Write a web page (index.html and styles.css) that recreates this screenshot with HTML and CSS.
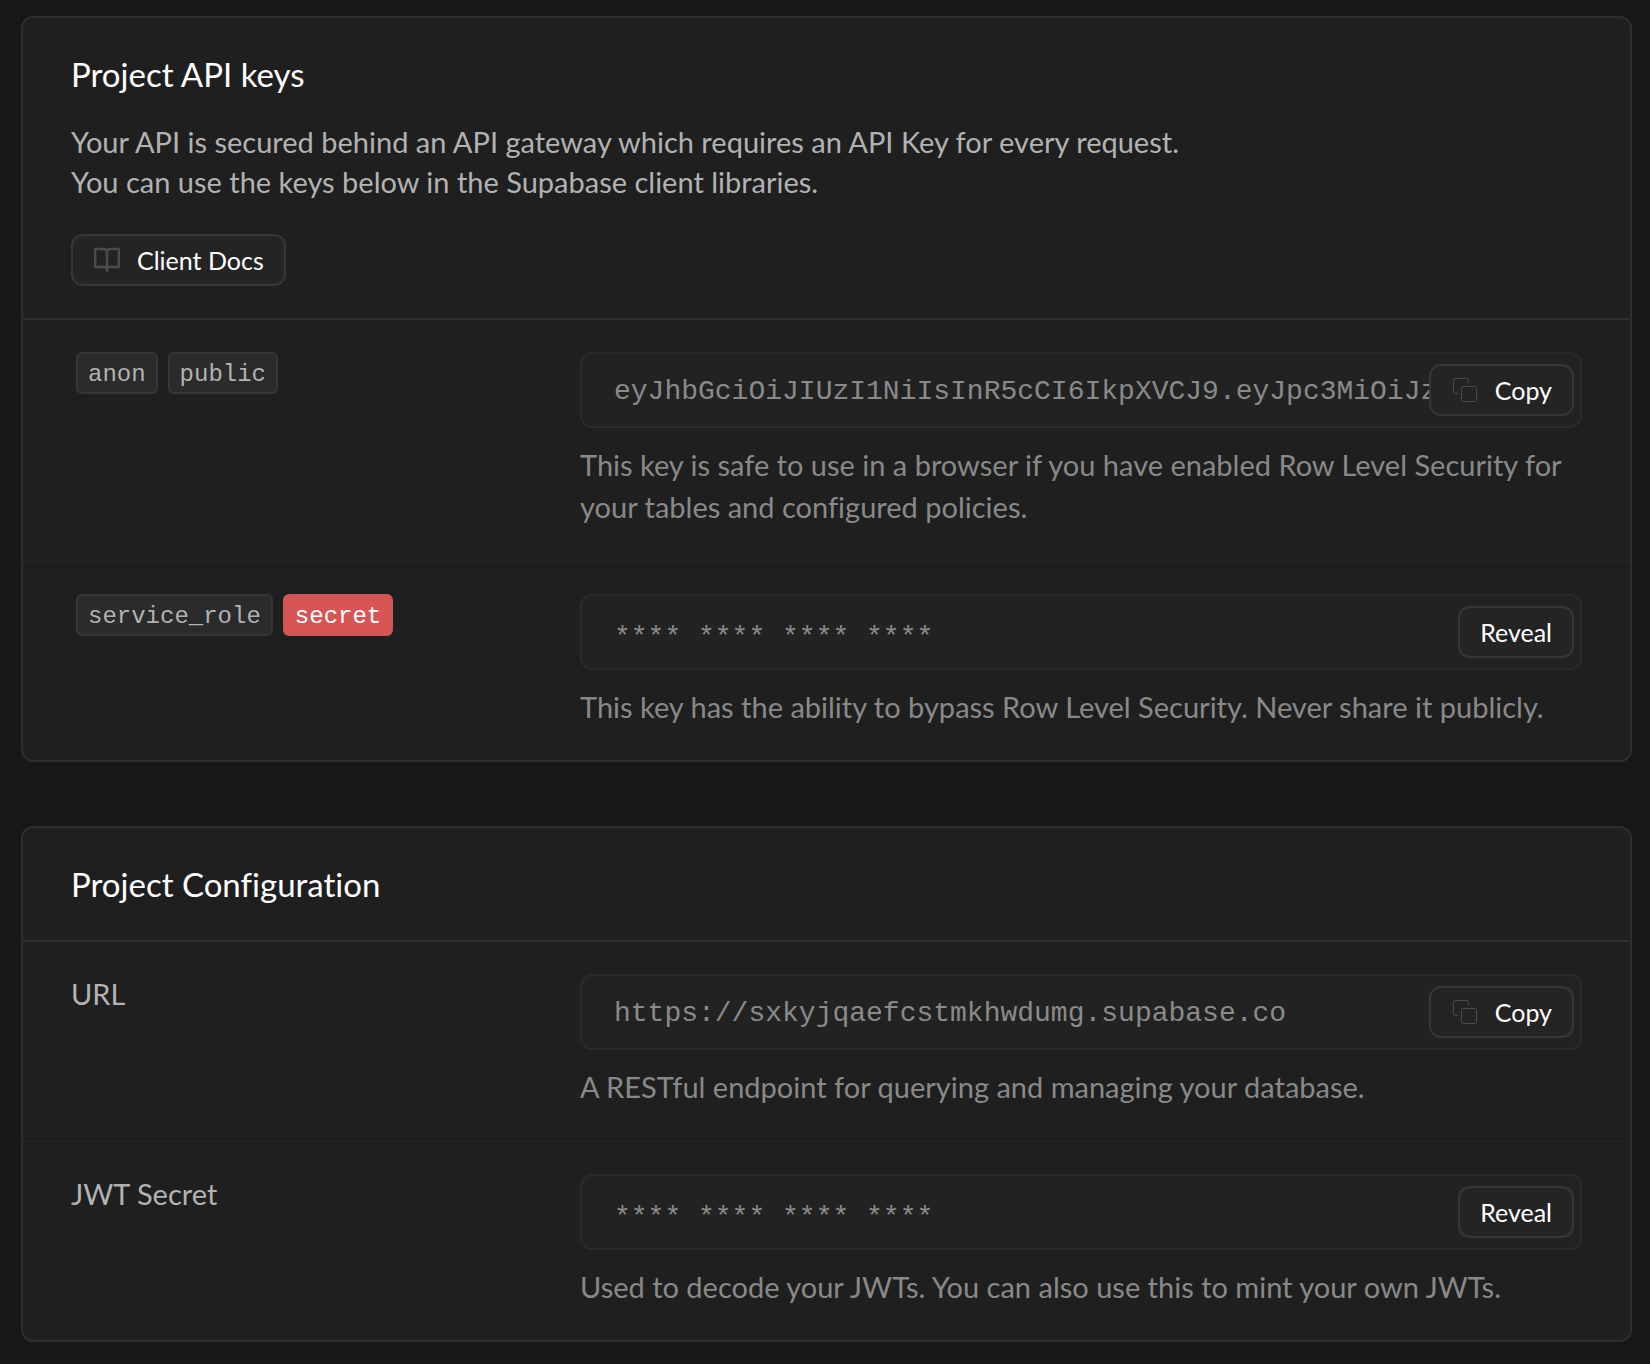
FILE: index.html
```html
<!DOCTYPE html>
<html lang="en">
<head>
<meta charset="utf-8">
<meta name="viewport" content="width=device-width, initial-scale=1">
<title>API Settings</title>
<link rel="stylesheet" href="styles.css">
</head>
<body>
<main class="page">
  <section class="card">
    <header class="card-header">
      <h2 class="card-title">Project API keys</h2>
      <p class="card-text">Your API is secured behind an API gateway which requires an API Key for every request.<br>You can use the keys below in the Supabase client libraries.</p>
      <button class="btn" type="button">
        <svg class="icon" viewBox="0 0 28 28" fill="none" stroke="currentColor" stroke-width="2.4" stroke-linejoin="round" stroke-linecap="round" aria-hidden="true"><path d="M14 6.500c0-2-1.500-3.500-3.500-3.500H2.200v18h9.300c1.500 0 2.500 1.200 2.500 3.800V6.500c0-2 1.500-3.500 3.500-3.500h8.300v18h-9.300c-1.500 0-2.500 1.200-2.500 3.800"/></svg>
        Client Docs
      </button>
    </header>
    <div class="row">
      <label class="row-label chips" for="anon-key"><code class="chip">anon</code><code class="chip">public</code></label>
      <div class="row-body">
        <div class="field">
          <input class="input" id="anon-key" type="text" readonly value="eyJhbGciOiJIUzI1NiIsInR5cCI6IkpXVCJ9.eyJpc3MiOiJz" aria-describedby="anon-help">
          <button class="btn field-btn" type="button">
            <svg class="icon" viewBox="0 0 28 28" fill="none" stroke="currentColor" stroke-linecap="round" aria-hidden="true"><rect x="10.500" y="10.500" width="15" height="15" rx="2"/><path d="M17.500 6.500v-2a2 2 0 0 0-2-2h-11a2 2 0 0 0-2 2v11a2 2 0 0 0 2 2h2"/></svg>
            Copy
          </button>
        </div>
        <p class="help" id="anon-help">This key is safe to use in a browser if you have enabled Row Level Security for your tables and configured policies.</p>
      </div>
    </div>
    <div class="row">
      <label class="row-label chips" for="service-key"><code class="chip">service_role</code><code class="chip chip-danger">secret</code></label>
      <div class="row-body">
        <div class="field">
          <input class="input input-masked" id="service-key" type="text" readonly value="**** **** **** ****" aria-describedby="service-help">
          <button class="btn field-btn" type="button">Reveal</button>
        </div>
        <p class="help" id="service-help">This key has the ability to bypass Row Level Security. Never share it publicly.</p>
      </div>
    </div>
  </section>

  <section class="card">
    <header class="card-header">
      <h2 class="card-title">Project Configuration</h2>
    </header>
    <div class="row">
      <label class="row-label" for="url">URL</label>
      <div class="row-body">
        <div class="field">
          <input class="input" id="url" type="text" readonly value="https://sxkyjqaefcstmkhwdumg.supabase.co" aria-describedby="url-help">
          <button class="btn field-btn" type="button">
            <svg class="icon" viewBox="0 0 28 28" fill="none" stroke="currentColor" stroke-linecap="round" aria-hidden="true"><rect x="10.500" y="10.500" width="15" height="15" rx="2"/><path d="M17.500 6.500v-2a2 2 0 0 0-2-2h-11a2 2 0 0 0-2 2v11a2 2 0 0 0 2 2h2"/></svg>
            Copy
          </button>
        </div>
        <p class="help" id="url-help">A RESTful endpoint for querying and managing your database.</p>
      </div>
    </div>
    <div class="row">
      <label class="row-label" for="jwt">JWT Secret</label>
      <div class="row-body">
        <div class="field">
          <input class="input input-masked" id="jwt" type="text" readonly value="**** **** **** ****" aria-describedby="jwt-help">
          <button class="btn field-btn" type="button">Reveal</button>
        </div>
        <p class="help" id="jwt-help">Used to decode your JWTs. You can also use this to mint your own JWTs.</p>
      </div>
    </div>
  </section>
</main>
</body>
</html>
```
FILE: styles.css
```css
*,
*::before,
*::after {
  box-sizing: border-box;
}

body {
  margin: 0;
  background: #171717;
  color: #b2b2b2;
  font-family: Lato, "Liberation Sans", sans-serif;
  font-size: 29px;
  font-variant-ligatures: none;
  line-height: 40px;
}

h2,
p {
  margin: 0;
}

.page {
  display: flex;
  flex-direction: column;
  gap: 64px;
  padding: 16px 18px 22px 21px;
}

.card {
  border: 2px solid #2e2e2e;
  border-radius: 12px;
  background: #1f1f1f;
}

.card-header {
  display: flex;
  flex-direction: column;
  align-items: flex-start;
  padding: 32px 48px;
}

.card-title {
  color: #fff;
  font-size: 33px;
  font-weight: 400;
  line-height: 48px;
}

.card-text {
  margin: 24px 0 32px;
}

.row {
  display: grid;
  grid-template-columns: minmax(0, 1fr) minmax(0, 2fr);
  gap: 8px;
  padding: 32px 48px;
  border-top: 2px solid #232323;
}

.card-header + .row {
  border-top-color: #2e2e2e;
}

.chips {
  display: flex;
  flex-wrap: wrap;
  align-content: flex-start;
  gap: 10px;
  padding-left: 5px;
}

.chip {
  padding: 4px 10px 0;
  border: 2px solid #363636;
  border-radius: 6px;
  background: #2b2b2b;
  color: #b2b2b2;
  font-family: "Liberation Mono", monospace;
  font-size: 24px;
  line-height: 34px;
}

.chip-danger {
  border-color: #cf5656;
  background: #d75555;
  color: #fff;
}

.row-body {
  display: flex;
  flex-direction: column;
  gap: 16px;
}

.field {
  position: relative;
}

.input {
  display: block;
  width: 100%;
  height: 76px;
  padding: 2px 32px 0;
  border: 2px solid #2a2a2a;
  border-radius: 12px;
  outline: none;
  background: #222;
  color: #8a8a8a;
  font-family: "Liberation Mono", monospace;
  font-size: 28px;
}

/* Asterisks sit high on the line, so masked values are set lower */
.input-masked {
  padding-top: 10px;
}

.btn {
  display: inline-flex;
  align-items: center;
  gap: 16px;
  height: 52px;
  padding: 0 20px;
  border: 2px solid #363636;
  border-radius: 12px;
  background: #242424;
  color: #fff;
  font-family: inherit;
  font-size: 25px;
  line-height: 32px;
  cursor: pointer;
}

.field-btn {
  position: absolute;
  top: 12px;
  right: 8px;
}

.icon {
  flex: none;
  width: 28px;
  height: 28px;
  color: #4c4c4c;
}

.help {
  color: #898989;
  line-height: 42px;
}

@media (max-width: 900px) {
  .row {
    grid-template-columns: minmax(0, 1fr);
    gap: 16px;
  }
}
```
